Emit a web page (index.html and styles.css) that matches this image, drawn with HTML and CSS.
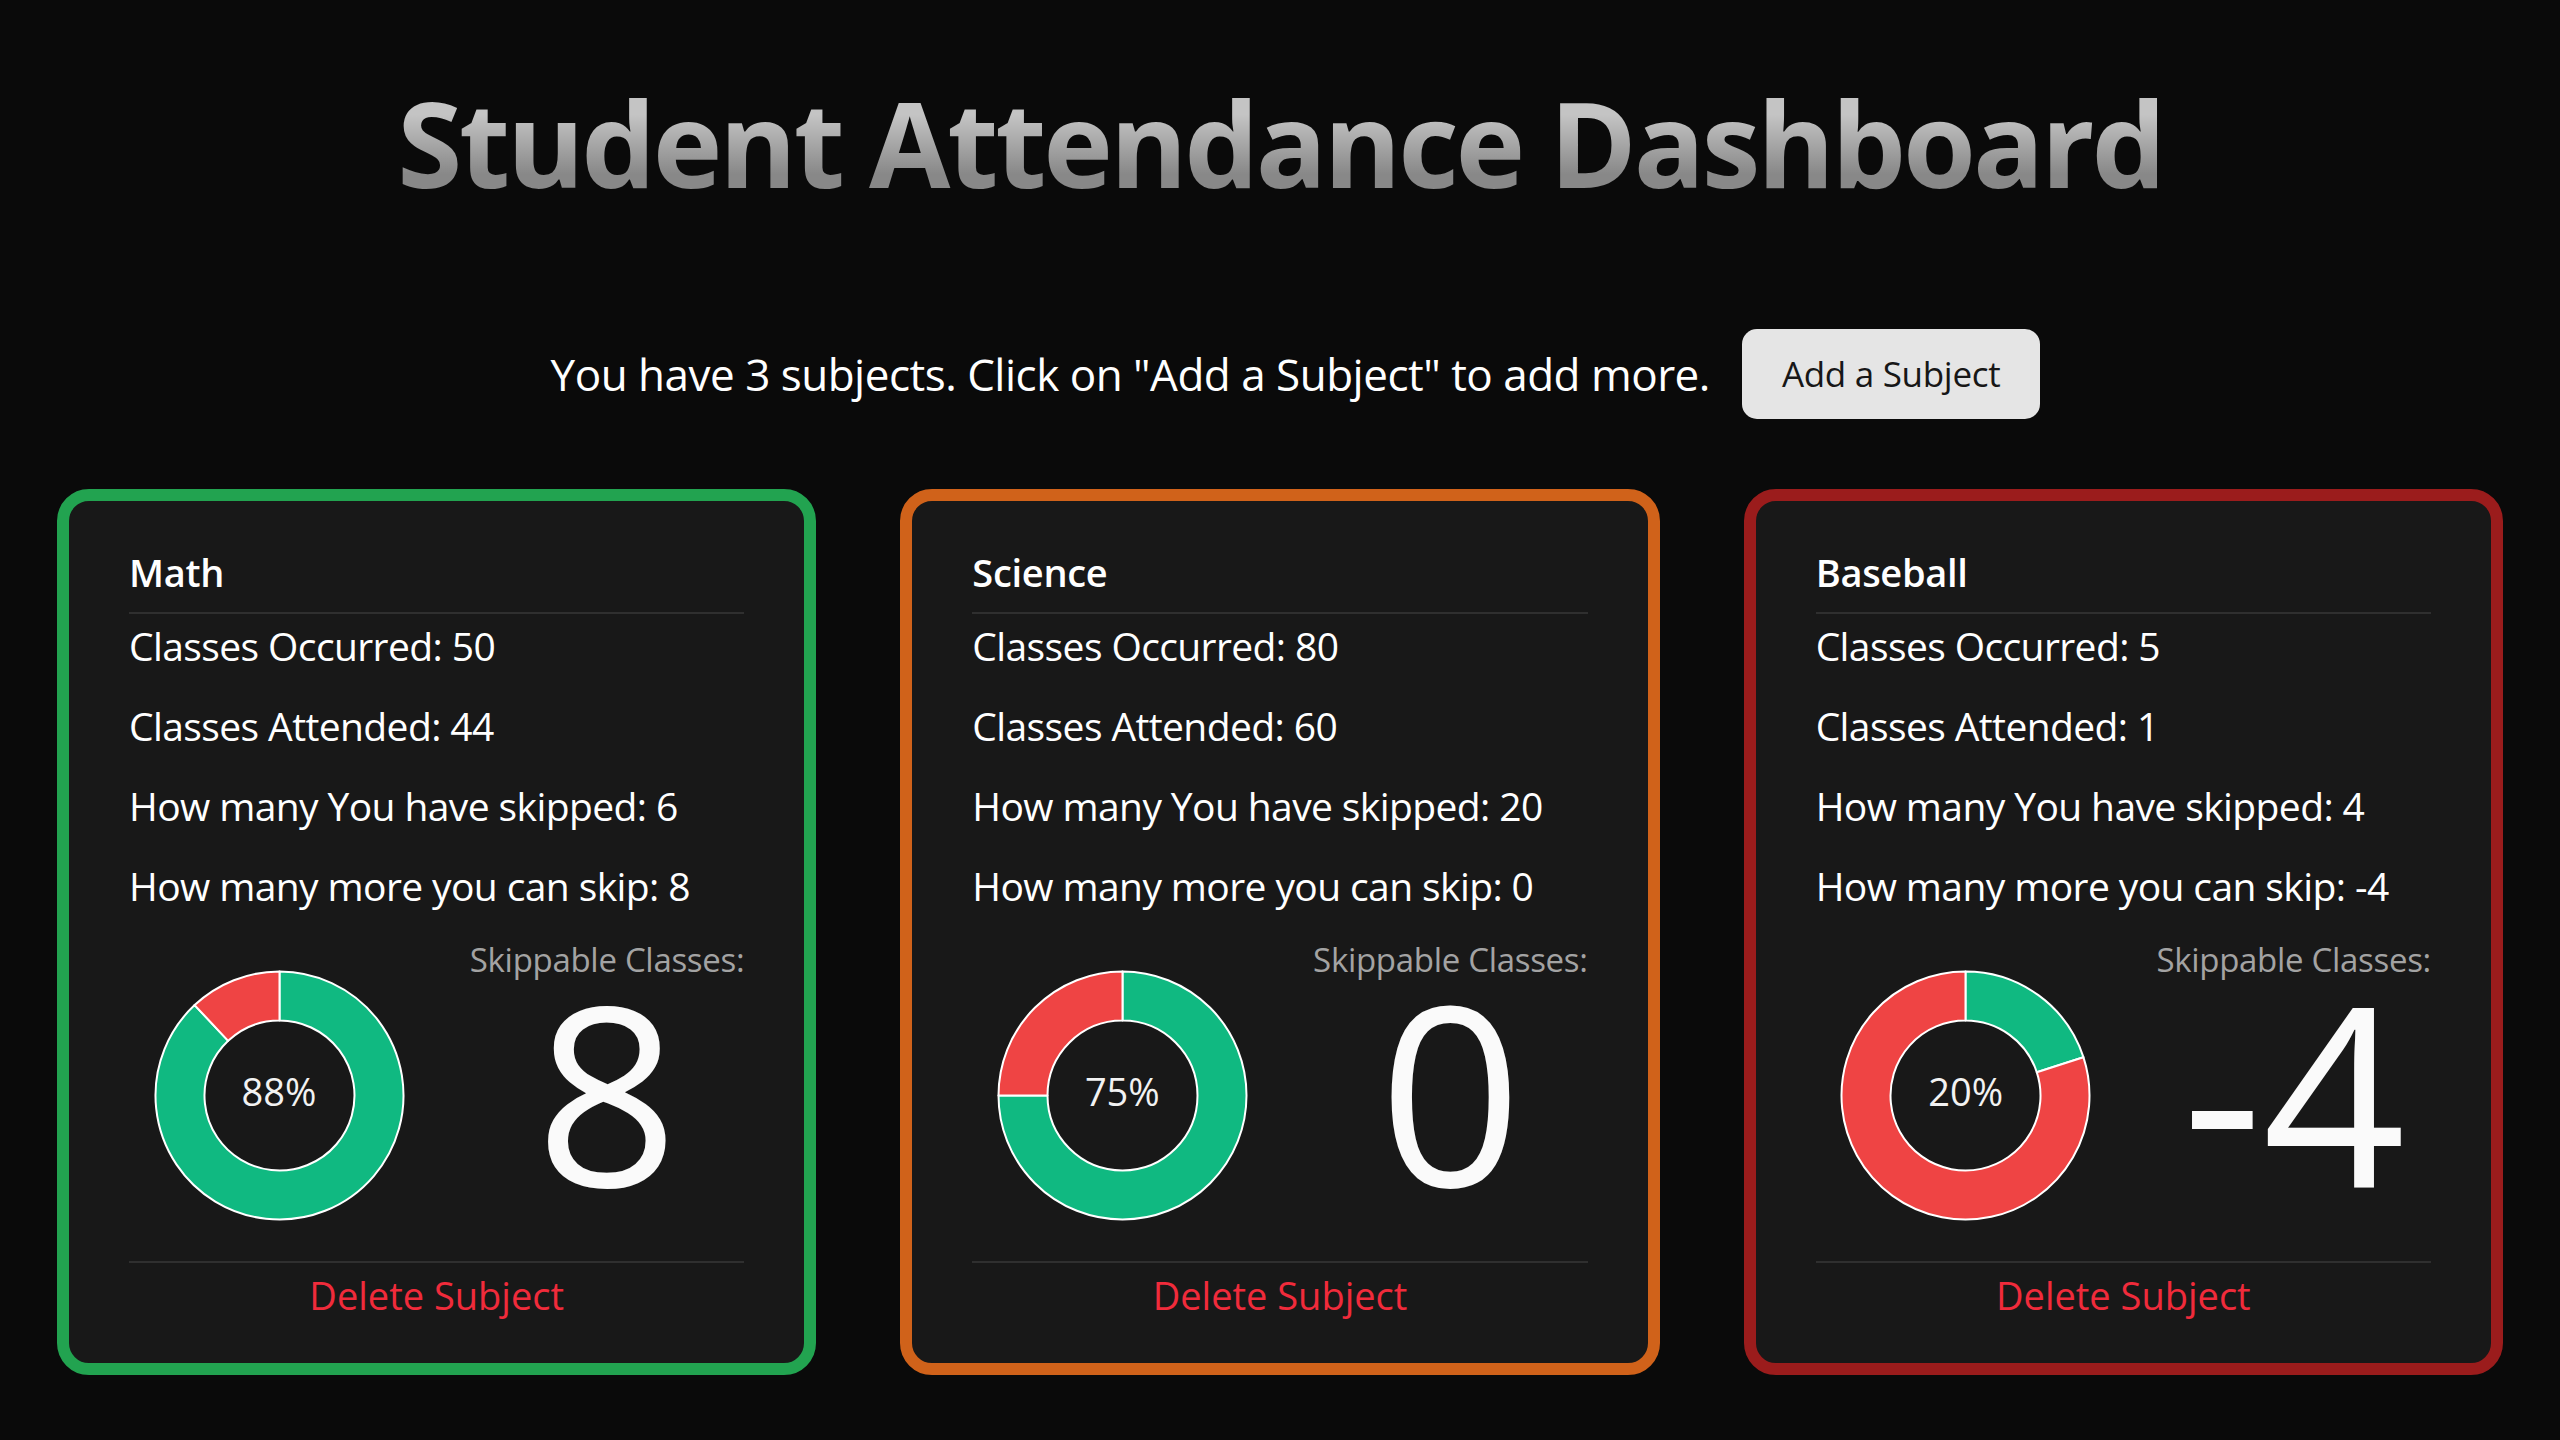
FILE: index.html
```html
<!DOCTYPE html>
<html lang="en">
<head>
<meta charset="utf-8">
<title>Student Attendance Dashboard</title>
<link rel="stylesheet" href="styles.css">
</head>
<body>
<h1 class="title">Student Attendance Dashboard</h1>
<div class="intro">
  <p class="intro-text">You have 3 subjects. Click on "Add a Subject" to add more.</p>
  <button class="add-btn">Add a Subject</button>
</div>
<main class="cards">
  <section class="card card-green">
    <h2 class="card-title">Math</h2>
    <p class="stat">Classes Occurred: 50</p>
    <p class="stat">Classes Attended: 44</p>
    <p class="stat">How many You have skipped: 6</p>
    <p class="stat">How many more you can skip: 8</p>
    <div class="chart-row">
      <div class="donut-box">
        <svg class="donut" width="251" height="251" viewBox="0 0 251 251">
          <path class="seg-green" d="M125.5 1.5 A124 124 0 1 1 40.62 35.10 L74.16 70.82 A75 75 0 1 0 125.5 50.5 Z"/>
          <path class="seg-red" d="M40.62 35.10 A124 124 0 0 1 125.5 1.5 L125.5 50.5 A75 75 0 0 0 74.16 70.82 Z"/>
        </svg>
        <span class="pct">88%</span>
      </div>
      <div class="skip-col">
        <span class="skip-label">Skippable Classes:</span>
        <span class="skip-num">8</span>
      </div>
    </div>
    <div class="card-foot"><button class="delete-btn">Delete Subject</button></div>
  </section>
  <section class="card card-orange">
    <h2 class="card-title">Science</h2>
    <p class="stat">Classes Occurred: 80</p>
    <p class="stat">Classes Attended: 60</p>
    <p class="stat">How many You have skipped: 20</p>
    <p class="stat">How many more you can skip: 0</p>
    <div class="chart-row">
      <div class="donut-box">
        <svg class="donut" width="251" height="251" viewBox="0 0 251 251">
          <path class="seg-green" d="M125.5 1.5 A124 124 0 1 1 1.5 125.5 L50.5 125.5 A75 75 0 1 0 125.5 50.5 Z"/>
          <path class="seg-red" d="M1.5 125.5 A124 124 0 0 1 125.5 1.5 L125.5 50.5 A75 75 0 0 0 50.5 125.5 Z"/>
        </svg>
        <span class="pct">75%</span>
      </div>
      <div class="skip-col">
        <span class="skip-label">Skippable Classes:</span>
        <span class="skip-num">0</span>
      </div>
    </div>
    <div class="card-foot"><button class="delete-btn">Delete Subject</button></div>
  </section>
  <section class="card card-red">
    <h2 class="card-title">Baseball</h2>
    <p class="stat">Classes Occurred: 5</p>
    <p class="stat">Classes Attended: 1</p>
    <p class="stat">How many You have skipped: 4</p>
    <p class="stat">How many more you can skip: -4</p>
    <div class="chart-row">
      <div class="donut-box">
        <svg class="donut" width="251" height="251" viewBox="0 0 251 251">
          <path class="seg-green" d="M125.5 1.5 A124 124 0 0 1 243.43 87.18 L196.83 102.32 A75 75 0 0 0 125.5 50.5 Z"/>
          <path class="seg-red" d="M243.43 87.18 A124 124 0 1 1 125.5 1.5 L125.5 50.5 A75 75 0 1 0 196.83 102.32 Z"/>
        </svg>
        <span class="pct">20%</span>
      </div>
      <div class="skip-col">
        <span class="skip-label">Skippable Classes:</span>
        <span class="skip-num">-4</span>
      </div>
    </div>
    <div class="card-foot"><button class="delete-btn">Delete Subject</button></div>
  </section>
</main>
</body>
</html>
```
FILE: styles.css
```css
* { box-sizing: border-box; }

html, body {
  margin: 0;
  padding: 0;
  background: #0a0a0a;
  color: #ffffff;
  font-family: "Open Sans", "Noto Sans", sans-serif;
}

body {
  min-height: 1440px;
}

.title {
  margin: 72px auto 0;
  width: max-content;
  text-align: center;
  font-size: 118px;
  line-height: 1.2;
  font-weight: 700;
  letter-spacing: -3.2px;
  background: linear-gradient(to bottom, #c4c4c4 30%, #888888 72%);
  -webkit-background-clip: text;
  background-clip: text;
  color: transparent;
}

.intro {
  margin-top: 115px;
  padding-left: 31px;
  display: flex;
  justify-content: center;
  align-items: center;
  gap: 32px;
}

.intro-text {
  margin: 0;
  font-size: 44px;
  line-height: 54px;
  letter-spacing: -0.5px;
  color: #ffffff;
}

.add-btn {
  height: 90px;
  padding: 0 40px;
  border: none;
  border-radius: 15px;
  background: #e5e5e5;
  color: #171717;
  font-family: inherit;
  font-size: 35px;
  letter-spacing: -0.3px;
}

.cards {
  margin-top: 70px;
  padding: 0 57px;
  display: grid;
  grid-template-columns: repeat(3, 1fr);
  gap: 84px;
}

.card {
  border: 12px solid;
  border-radius: 32px;
  background: #181818;
  padding: 47px 60px 44px;
  display: flex;
  flex-direction: column;
}

.card-green { border-color: #22a350; }
.card-orange { border-color: #d0621a; }
.card-red { border-color: #9b1c1c; }

.card-title {
  margin: 0;
  font-size: 38px;
  line-height: 48px;
  font-weight: 600;
  letter-spacing: -0.3px;
  padding-bottom: 16px;
  border-bottom: 2px solid #2f2f2f;
}

.stat {
  margin: 32px 0 0;
  font-size: 39px;
  line-height: 48px;
  letter-spacing: -0.6px;
}

.card-title + .stat {
  margin-top: 8px;
}

.chart-row {
  margin-top: 30px;
  display: flex;
  justify-content: space-between;
  align-items: flex-start;
}

.donut-box {
  position: relative;
  width: 300px;
  margin-top: 30px;
  display: flex;
  justify-content: center;
  align-items: center;
}

.donut path {
  stroke: #ffffff;
  stroke-width: 2;
  stroke-linejoin: round;
}

.seg-green { fill: #10b981; }
.seg-red { fill: #ef4444; }

.pct {
  position: absolute;
  left: 0;
  right: 0;
  top: 50%;
  transform: translateY(-50%);
  margin-top: -4px;
  text-align: center;
  font-size: 38px;
  line-height: 1;
  color: #f2f2f2;
}

.skip-col {
  display: flex;
  flex-direction: column;
  align-items: center;
}

.skip-label {
  font-size: 33px;
  line-height: 40px;
  letter-spacing: -0.3px;
  color: #a3a3a3;
}

.skip-num {
  margin-top: 10px;
  font-size: 250px;
  line-height: 200px;
  color: #fafafa;
}

.card-foot {
  margin-top: 40px;
  border-top: 2px solid #2f2f2f;
  padding-top: 8px;
  text-align: center;
}

.delete-btn {
  border: none;
  background: none;
  padding: 0;
  font-family: inherit;
  font-size: 38px;
  line-height: 48px;
  color: #f02b3b;
  cursor: pointer;
}
```
